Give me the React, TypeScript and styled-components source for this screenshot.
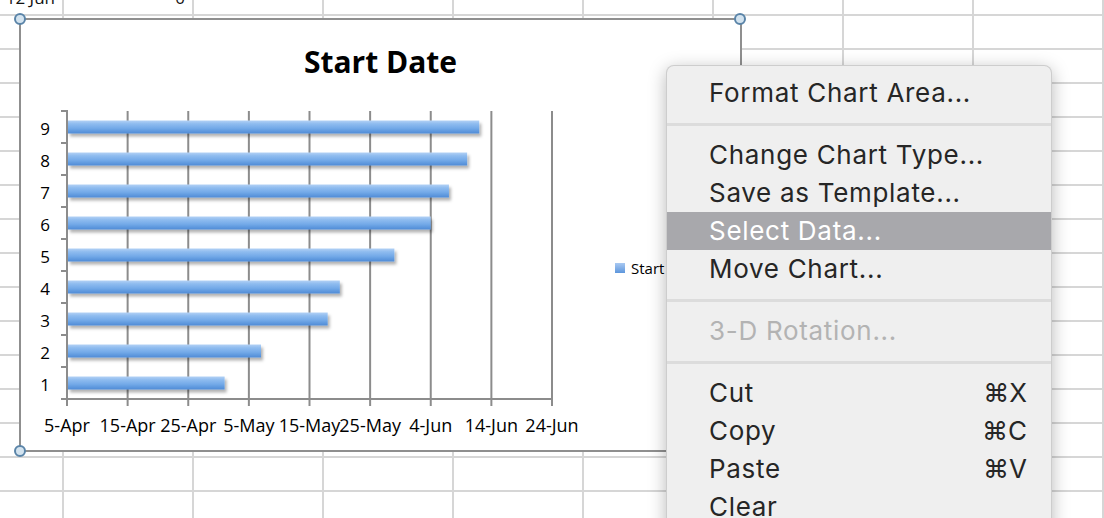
import React from 'react';
import styled, { createGlobalStyle } from 'styled-components';

const GlobalStyle = createGlobalStyle`
  html, body {
    margin: 0;
    padding: 0;
    background: #ffffff;
  }
  body {
    width: 1104px;
    height: 518px;
    overflow: hidden;
  }
`;

const Page = styled.div`
  position: relative;
  width: 1104px;
  height: 518px;
  overflow: hidden;
  background: #fff;
`;

const Sheet = styled.div`
  display: grid;
  grid-template-columns: 64px repeat(9, 130px);
  grid-template-rows: 16px repeat(15, 34px);
`;

const Cell = styled.div`
  box-sizing: border-box;
  border-right: 2px solid #d6d6d6;
  border-bottom: 2px solid #d6d6d6;
  overflow: hidden;
  text-align: right;
  padding-right: 7px;
  font-family: 'Open Sans', sans-serif;
  font-size: 17px;
  color: #111;
  white-space: nowrap;
`;

const CellText = styled.div`
  line-height: 20px;
  margin-top: -12px;
`;

const ChartBox = styled.div`
  position: absolute;
  left: 19px;
  top: 18px;
  width: 723px;
  height: 434px;
  box-sizing: border-box;
  border: 2px solid #8f8f8f;
  background: #fff;
  display: flex;
  flex-direction: column;
`;

const Handle = styled.span<{ $v: 'top' | 'bottom'; $h: 'left' | 'right' }>`
  position: absolute;
  width: 12px;
  height: 12px;
  box-sizing: border-box;
  border-radius: 50%;
  border: 2px solid #5a84a8;
  background: #d3e3ef;
  ${p => (p.$v === 'top' ? 'top: -7px;' : 'bottom: -7px;')}
  ${p => (p.$h === 'left' ? 'left: -7px;' : 'right: -6px;')}
`;

const Title = styled.div`
  padding-top: 9px;
  height: 65px;
  line-height: 65px;
  text-align: center;
  font-family: 'Open Sans', sans-serif;
  font-weight: 700;
  font-size: 30px;
  color: #000;
`;

const ChartBody = styled.div`
  display: flex;
  align-items: center;
`;

const Legend = styled.div`
  display: flex;
  align-items: center;
  gap: 6px;
  padding-left: 19px;
  margin-bottom: 8px;
  font-family: 'Open Sans', sans-serif;
  font-size: 15px;
  color: #000;
  white-space: nowrap;
`;

const LegendKey = styled.span`
  width: 10px;
  height: 10px;
  background: linear-gradient(#a9c9f2, #5d96dc);
`;

const Menu = styled.div`
  position: absolute;
  left: 666px;
  top: 65px;
  width: 386px;
  height: 480px;
  box-sizing: border-box;
  padding-top: 8px;
  background: #efefef;
  border: 1px solid rgba(0, 0, 0, 0.14);
  border-radius: 8px;
  box-shadow: 0 4px 18px rgba(0, 0, 0, 0.28);
  font-family: Inter, 'DejaVu Sans', sans-serif;
  font-size: 26px;
  letter-spacing: 0.7px;
  color: #262626;
`;

const MenuItem = styled.div<{ $active?: boolean; $disabled?: boolean }>`
  display: flex;
  justify-content: space-between;
  height: 38px;
  line-height: 38px;
  padding: 0 24px 0 42px;
  background: ${p => (p.$active ? '#a8a8ac' : 'transparent')};
  color: ${p => (p.$active ? '#ffffff' : p.$disabled ? '#b3b3b3' : '#262626')};
`;

const Separator = styled.div`
  height: 24px;
  display: flex;
  align-items: center;
  &::after {
    content: '';
    flex: 1;
    height: 3px;
    background: #dcdcdc;
  }
`;

const Shortcut = styled.span`
  letter-spacing: 0;
`;

const X0 = 67;
const STEP = 60.625;
const PER_DAY = STEP / 10;
const TOP = 111;
const BASE = 399;
const ROW = 32;
const dates = ['5-Apr', '15-Apr', '25-Apr', '5-May', '15-May', '25-May', '4-Jun', '14-Jun', '24-Jun'];
const days = [26, 32, 43, 45, 54, 60, 63, 66, 68];

function Plot() {
  const axis = '#8c8c8c';
  return (
    <svg width={575} height={356} viewBox="21 94 575 356" style={{ display: 'block', flexShrink: 0 }}>
      <defs>
        <linearGradient id="bar" x1="0" y1="0" x2="0" y2="1">
          <stop offset="0" stopColor="#b3d1f5" />
          <stop offset="0.25" stopColor="#8fbcef" />
          <stop offset="0.6" stopColor="#73a9e8" />
          <stop offset="1" stopColor="#4f8bd6" />
        </linearGradient>
        <filter id="shadow" x="-5%" y="-50%" width="110%" height="200%">
          <feDropShadow dx="2" dy="3" stdDeviation="1.6" floodColor="#000" floodOpacity="0.3" />
        </filter>
      </defs>
      {dates.map((_, i) =>
        i === 0 ? null : (
          <line key={'g' + i} x1={X0 + STEP * i} x2={X0 + STEP * i} y1={TOP} y2={BASE} stroke={axis} strokeWidth={2} />
        )
      )}
      {Array.from({ length: 10 }, (_, k) => (
        <line key={'t' + k} x1={61} x2={X0} y1={TOP + ROW * k} y2={TOP + ROW * k} stroke={axis} strokeWidth={2} />
      ))}
      {dates.map((_, i) => (
        <line key={'b' + i} x1={X0 + STEP * i} x2={X0 + STEP * i} y1={BASE} y2={406} stroke={axis} strokeWidth={2} />
      ))}
      <line x1={X0} x2={X0} y1={TOP - 1} y2={BASE + 1} stroke={axis} strokeWidth={2} />
      <line x1={61} x2={X0 + STEP * 8 + 1} y1={BASE} y2={BASE} stroke={axis} strokeWidth={2} />
      {days.map((d, i) => {
        const c = BASE - ROW * (i + 0.5);
        return (
          <rect key={'r' + i} x={X0 + 1} y={c - 6.5} width={d * PER_DAY - 1} height={13} fill="url(#bar)" filter="url(#shadow)" />
        );
      })}
      <g fontFamily="'Open Sans', sans-serif" fill="#000">
        {days.map((_, i) => (
          <text key={'y' + i} x={50} y={BASE - ROW * (i + 0.5) + 7.5} textAnchor="end" fontSize={17}>
            {i + 1}
          </text>
        ))}
        {dates.map((d, i) => (
          <text key={'x' + i} x={X0 + STEP * i} y={432} textAnchor="middle" fontSize={18}>
            {d}
          </text>
        ))}
      </g>
    </svg>
  );
}

type Entry = { label: string; key?: string; active?: boolean; disabled?: boolean } | 'sep';

const entries: Entry[] = [
  { label: 'Format Chart Area...' },
  'sep',
  { label: 'Change Chart Type...' },
  { label: 'Save as Template...' },
  { label: 'Select Data...', active: true },
  { label: 'Move Chart...' },
  'sep',
  { label: '3-D Rotation...', disabled: true },
  'sep',
  { label: 'Cut', key: '⌘X' },
  { label: 'Copy', key: '⌘C' },
  { label: 'Paste', key: '⌘V' },
  { label: 'Clear' },
];

export default function App() {
  const cells = [];
  for (let r = 0; r < 16; r++) {
    for (let c = 0; c < 10; c++) {
      let text = '';
      if (r === 0 && c === 0) text = '12 Jun';
      if (r === 0 && c === 1) text = '0';
      cells.push(<Cell key={r + '-' + c}>{text && <CellText>{text}</CellText>}</Cell>);
    }
  }
  return (
    <Page>
      <GlobalStyle />
      <Sheet>{cells}</Sheet>
      <ChartBox>
        <Handle $v="top" $h="left" />
        <Handle $v="top" $h="right" />
        <Handle $v="bottom" $h="left" />
        <Handle $v="bottom" $h="right" />
        <Title>Start Date</Title>
        <ChartBody>
          <Plot />
          <Legend>
            <LegendKey />
            Start Date
          </Legend>
        </ChartBody>
      </ChartBox>
      <Menu>
        {entries.map((e, i) =>
          e === 'sep' ? (
            <Separator key={i} />
          ) : (
            <MenuItem key={i} $active={e.active} $disabled={e.disabled}>
              <span>{e.label}</span>
              {e.key && <Shortcut>{e.key}</Shortcut>}
            </MenuItem>
          )
        )}
      </Menu>
    </Page>
  );
}
